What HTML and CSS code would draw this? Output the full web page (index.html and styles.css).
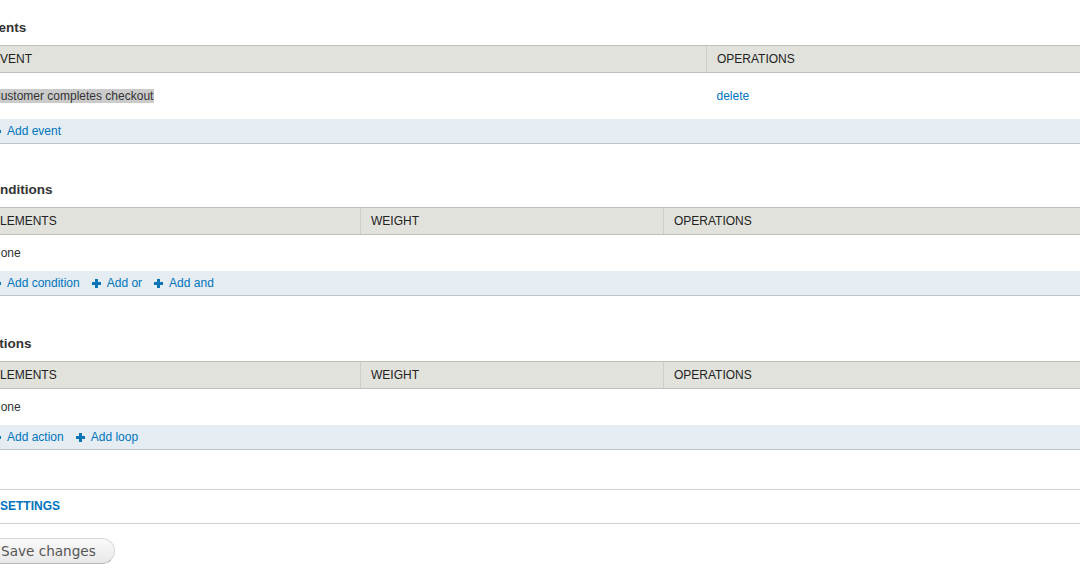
FILE: index.html
```html
<!DOCTYPE html>
<html>
<head>
<meta charset="utf-8">
<link rel="stylesheet" href="styles.css">
</head>
<body>
<div class="page">
  <section class="block block-events">
    <h3 class="block-title">Events</h3>
    <table class="rules-table">
      <thead>
        <tr><th class="col-event">Event</th><th>Operations</th></tr>
      </thead>
      <tbody>
        <tr class="row-tall"><td><span class="hl">Customer completes checkout</span></td><td><a href="#">delete</a></td></tr>
        <tr class="add-row"><td colspan="2">
          <span class="add-links">
            <a href="#" class="add-link"><svg class="plus" viewBox="0 0 9 9"><rect x="3" y="0" width="3" height="9"/><rect x="0" y="3" width="9" height="3"/></svg>Add event</a>
          </span>
        </td></tr>
      </tbody>
    </table>
  </section>

  <section class="block block-conditions">
    <h3 class="block-title">Conditions</h3>
    <table class="rules-table">
      <thead>
        <tr><th class="col-elements">Elements</th><th class="col-weight">Weight</th><th>Operations</th></tr>
      </thead>
      <tbody>
        <tr class="row-normal"><td>None</td><td></td><td></td></tr>
        <tr class="add-row"><td colspan="3">
          <span class="add-links">
            <a href="#" class="add-link"><svg class="plus" viewBox="0 0 9 9"><rect x="3" y="0" width="3" height="9"/><rect x="0" y="3" width="9" height="3"/></svg>Add condition</a>
            <a href="#" class="add-link"><svg class="plus" viewBox="0 0 9 9"><rect x="3" y="0" width="3" height="9"/><rect x="0" y="3" width="9" height="3"/></svg>Add or</a>
            <a href="#" class="add-link"><svg class="plus" viewBox="0 0 9 9"><rect x="3" y="0" width="3" height="9"/><rect x="0" y="3" width="9" height="3"/></svg>Add and</a>
          </span>
        </td></tr>
      </tbody>
    </table>
  </section>

  <section class="block block-actions">
    <h3 class="block-title">Actions</h3>
    <table class="rules-table">
      <thead>
        <tr><th class="col-elements">Elements</th><th class="col-weight">Weight</th><th>Operations</th></tr>
      </thead>
      <tbody>
        <tr class="row-normal"><td>None</td><td></td><td></td></tr>
        <tr class="add-row"><td colspan="3">
          <span class="add-links">
            <a href="#" class="add-link"><svg class="plus" viewBox="0 0 9 9"><rect x="3" y="0" width="3" height="9"/><rect x="0" y="3" width="9" height="3"/></svg>Add action</a>
            <a href="#" class="add-link"><svg class="plus" viewBox="0 0 9 9"><rect x="3" y="0" width="3" height="9"/><rect x="0" y="3" width="9" height="3"/></svg>Add loop</a>
          </span>
        </td></tr>
      </tbody>
    </table>
  </section>

  <div class="settings">
    <a href="#" class="settings-legend">Settings</a>
  </div>

  <div class="form-actions">
    <button class="btn">Save changes</button>
  </div>
</div>
</body>
</html>
```

FILE: styles.css
```css
html, body {
  margin: 0;
  padding: 0;
  background: #fff;
  overflow: hidden;
}

body {
  font-family: "Liberation Sans", Arial, sans-serif;
  font-size: 12px;
  color: #333;
}

.page {
  width: 1115px;
  margin-left: -18px;
  padding-top: 20px;
}

a {
  color: #0074bd;
  text-decoration: none;
}

.block-title {
  margin: 0 0 9px 0;
  font-size: 13.5px;
  line-height: 16px;
  font-weight: bold;
  color: #333;
}

.block-conditions { margin-top: 38px; }
.block-actions { margin-top: 40px; }

.rules-table {
  width: 100%;
  border-collapse: collapse;
  table-layout: fixed;
}

.rules-table th {
  background: #e1e2dc;
  border-top: 1px solid #bebfb9;
  border-bottom: 1px solid #bebfb9;
  height: 26px;
  padding: 0 10px;
  text-align: left;
  font-weight: normal;
  text-transform: uppercase;
  color: #222;
  font-size: 12px;
}

.rules-table th + th {
  border-left: 1px solid #cdcec8;
}

.col-event { width: 704px; }
.col-elements { width: 358px; }
.col-weight { width: 282px; }

.rules-table td {
  padding: 0 10px;
  vertical-align: middle;
  line-height: 14px;
}

.row-tall td { height: 46px; }
.row-normal td { height: 36px; }

.hl {
  background: #cbcbcb;
  color: #333;
  padding-right: 1px;
}

.add-row td {
  background: #e5edf3;
  height: 24px;
  border-bottom: 1px solid #bfc3c5;
}

.add-links {
  display: flex;
  align-items: center;
  gap: 12px;
}

.add-link {
  display: inline-flex;
  align-items: center;
  gap: 6px;
}

.plus {
  width: 9px;
  height: 9px;
  fill: #0a74b8;
  flex: none;
}

.settings {
  margin-top: 39px;
  border-top: 1px solid #cfcfcf;
  border-bottom: 1px solid #cfcfcf;
  height: 33px;
  display: flex;
  align-items: center;
  padding-left: 18px;
}

.settings-legend {
  font-weight: bold;
  text-transform: uppercase;
  font-size: 12px;
  color: #0074bd;
  margin-top: -1px;
}

.form-actions {
  margin-top: 14px;
}

.btn {
  font-family: "DejaVu Sans", Verdana, sans-serif;
  font-size: 13.6px;
  color: #555;
  height: 26px;
  padding: 0 18px 0 18px;
  border: 1px solid #d8d8d8;
  border-bottom-color: #b8b8b8;
  border-radius: 14px;
  background: linear-gradient(#fafafa, #e8e8e8);
  cursor: pointer;
}
```
